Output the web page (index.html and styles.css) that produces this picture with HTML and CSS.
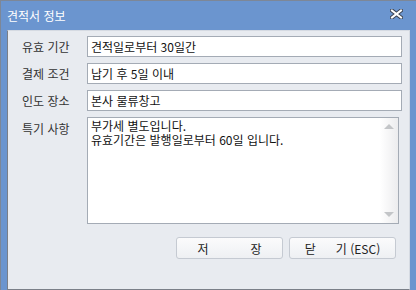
FILE: index.html
```html
<!DOCTYPE html>
<html lang="ko">
<head>
  <meta charset="UTF-8">
  <title>견적서 정보</title>
  <link rel="stylesheet" href="styles.css">
</head>
<body>
  <div class="window">
    <!-- Title bar -->
    <div class="titlebar">
      <span class="title">견적서 정보</span>
      <svg class="close" width="13" height="10" viewBox="0 0 13 10">
        <path d="M2 1.5 L11 8.5 M11 1.5 L2 8.5" stroke="#3b4250" stroke-width="4" stroke-linecap="square"/>
        <path d="M2 1.5 L11 8.5 M11 1.5 L2 8.5" stroke="#ffffff" stroke-width="2" stroke-linecap="square"/>
      </svg>
    </div>

    <!-- Content -->
    <div class="panel">
      <div class="form">
        <label class="label">유효 기간</label>
        <div class="field">견적일로부터 30일간</div>

        <label class="label">결제 조건</label>
        <div class="field">납기 후 5일 이내</div>

        <label class="label">인도 장소</label>
        <div class="field">본사 물류창고</div>

        <label class="label top">특기 사항</label>
        <div class="memo">
          <div class="memo-text">
            <div>부가세 별도입니다.</div>
            <div>유효기간은 발행일로부터 60일 입니다.</div>
          </div>
          <div class="scrollbar">
            <span class="arrow up"></span>
            <span class="arrow down"></span>
          </div>
        </div>
      </div>

      <div class="buttons">
        <button class="btn"><span>저</span><span>장</span></button>
        <button class="btn close-btn"><span>닫</span><span>기 (ESC)</span></button>
      </div>
    </div>
  </div>
</body>
</html>
```

FILE: styles.css
```css
body {
  margin: 0;
  font-family: "Noto Sans CJK KR", "Noto Sans", sans-serif;
  font-size: 12px;
}

.window {
  width: 415px;
  height: 289px;
  background: #6b95cf;
  border-top: 1px solid #7d8797;
  border-left: 1px solid #7d8797;
}

.titlebar {
  height: 29px;
  display: flex;
  align-items: center;
  justify-content: space-between;
  padding: 0 13px 0 6px;
  color: #fff;
}

.title {
  font-size: 12px;
  margin-top: -1px;
}

.close {
  margin-top: -3px;
}

.panel {
  margin-left: 6px;
  width: 380px;
  height: 253px;
  background: #e8ebf0;
  border: 1px solid #d5dae2;
  border-left-color: #7a7f88;
  border-bottom-color: #7a7f88;
  padding: 5px 7px 0 14px;
}

.form {
  display: grid;
  grid-template-columns: 65px 1fr;
  row-gap: 6px;
}

.label {
  color: #333;
  display: flex;
  align-items: center;
  line-height: 21px;
}

.label.top {
  align-items: flex-start;
  padding-top: 1px;
}

.field {
  height: 19px;
  line-height: 19px;
  background: #fff;
  border: 1px solid #a4abb5;
  padding-left: 3px;
  color: #111;
}

.memo {
  height: 105px;
  margin-right: 3px;
  background: #fff;
  border: 1px solid #a4abb5;
  display: flex;
}

.memo-text {
  flex: 1;
  padding: 1px 3px;
  color: #111;
}

.memo-text div {
  height: 14px;
  line-height: 14px;
}

.scrollbar {
  width: 18px;
  background: linear-gradient(to right, #ffffff, #ececee);
  display: flex;
  flex-direction: column;
  justify-content: space-between;
  align-items: center;
  padding: 6px 0;
}

.arrow {
  width: 0;
  height: 0;
  border-left: 5px solid transparent;
  border-right: 5px solid transparent;
}

.arrow.up {
  border-bottom: 5px solid #c3c5c8;
}

.arrow.down {
  border-top: 5px solid #c3c5c8;
}

.buttons {
  display: flex;
  justify-content: flex-end;
  gap: 6px;
  margin-top: 13px;
  padding-right: 6px;
}

.btn {
  width: 107px;
  height: 22px;
  border: 1px solid #c5cad2;
  border-radius: 3px;
  background: linear-gradient(#fbfbfc, #eef0f3);
  font-family: inherit;
  font-size: 12px;
  color: #222;
  display: flex;
  align-items: center;
  justify-content: center;
  gap: 42px;
  padding: 0;
}

.close-btn {
  gap: 20px;
}
```
